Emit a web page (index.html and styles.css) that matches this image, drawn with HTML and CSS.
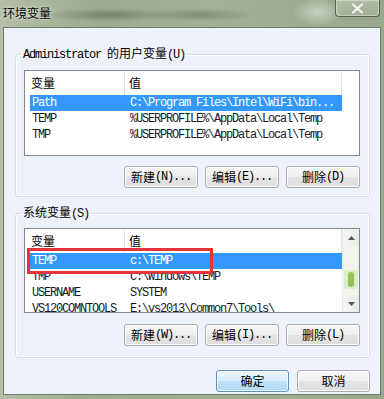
FILE: index.html
```html
<!DOCTYPE html>
<html lang="zh-CN">
<head>
<meta charset="utf-8">
<title>环境变量</title>
<link rel="stylesheet" href="styles.css">
</head>
<body>
<div class="window">
  <div class="titlebar">
    <span class="title">环境变量</span>
    <div class="close-btn">
      <svg width="17" height="11" viewBox="0 0 17 11"><path d="M4 1.5 L13 9.5 M13 1.5 L4 9.5" stroke="#ffffff" stroke-width="2.2" stroke-linecap="round" opacity="0.85"/></svg>
    </div>
  </div>
  <div class="client">
    <fieldset class="group">
      <legend><span class="lat">Administrator </span><span class="cjk">的用户变量</span><span class="lat">(U)</span></legend>
      <div class="list list-user">
        <div class="list-main">
          <div class="list-head">
            <span class="hcol1">变量</span><span class="hcol2">值</span>
          </div>
          <div class="row selected"><span class="c1">Path</span><span class="c2">C:\Program Files\Intel\WiFi\bin...</span></div>
          <div class="row"><span class="c1">TEMP</span><span class="c2">%USERPROFILE%\AppData\Local\Temp</span></div>
          <div class="row"><span class="c1">TMP</span><span class="c2">%USERPROFILE%\AppData\Local\Temp</span></div>
        </div>
      </div>
      <div class="btn-row">
        <button class="btn"><span class="cjk">新建</span><span class="lat">(N)...</span></button>
        <button class="btn"><span class="cjk">编辑</span><span class="lat">(E)...</span></button>
        <button class="btn"><span class="cjk">删除</span><span class="lat">(D)</span></button>
      </div>
    </fieldset>

    <fieldset class="group group-sys">
      <legend><span class="cjk">系统变量</span><span class="lat">(S)</span></legend>
      <div class="list list-sys">
        <div class="list-main">
          <div class="list-head">
            <span class="hcol1">变量</span><span class="hcol2">值</span>
          </div>
          <div class="row selected"><span class="c1">TEMP</span><span class="c2">c:\TEMP</span></div>
          <div class="row"><span class="c1">TMP</span><span class="c2">C:\Windows\TEMP</span></div>
          <div class="row"><span class="c1">USERNAME</span><span class="c2">SYSTEM</span></div>
          <div class="row"><span class="c1">VS120COMNTOOLS</span><span class="c2">E:\vs2013\Common7\Tools\</span></div>
          <div class="mark"></div>
        </div>
        <div class="vscroll">
          <div class="sb-arrow"><svg width="7" height="4" viewBox="0 0 7 4"><path d="M0 4 L3.5 0 L7 4 Z" fill="#4d5a60"/></svg></div>
          <div class="sb-track sb-track-top"></div>
          <div class="sb-thumb"><div class="sb-grip"></div></div>
          <div class="sb-track"></div>
          <div class="sb-arrow"><svg width="7" height="4" viewBox="0 0 7 4"><path d="M0 0 L3.5 4 L7 0 Z" fill="#4d5a60"/></svg></div>
        </div>
      </div>
      <div class="btn-row">
        <button class="btn"><span class="cjk">新建</span><span class="lat">(W)...</span></button>
        <button class="btn"><span class="cjk">编辑</span><span class="lat">(I)...</span></button>
        <button class="btn"><span class="cjk">删除</span><span class="lat">(L)</span></button>
      </div>
    </fieldset>

    <div class="footer">
      <button class="btn btn-wide btn-default">确定</button>
      <button class="btn btn-wide">取消</button>
    </div>
  </div>
</div>
</body>
</html>
```

FILE: styles.css
```css
* { box-sizing: border-box; }
html, body { margin: 0; padding: 0; }
body {
  width: 384px;
  height: 399px;
  overflow: hidden;
  font-family: "Noto Sans CJK SC", sans-serif;
  font-size: 12px;
  color: #000;
}
.window {
  width: 384px;
  height: 399px;
  display: flex;
  flex-direction: column;
  padding: 0 3px 4px 3px;
  background:
    radial-gradient(ellipse 70px 7px at 110px 15px, rgba(45,55,40,0.35), transparent),
    radial-gradient(ellipse 55px 7px at 200px 15px, rgba(45,55,40,0.3), transparent),
    radial-gradient(ellipse 25px 14px at 318px 12px, rgba(255,255,255,0.45), transparent),
    linear-gradient(to right, #b4bea9 0%, #9dab90 25%, #a4b198 55%, #97a78a 100%);
}
.window::after { content: none; }
.titlebar {
  height: 27px;
  flex: none;
  display: flex;
  align-items: center;
}
.title {
  font-size: 12px;
  line-height: 14px;
  margin-top: -1px;
  text-shadow: 0 0 5px rgba(230,235,225,0.9), 0 0 2px rgba(230,235,225,0.9);
}
.close-btn {
  align-self: flex-start;
  margin-left: auto;
  margin-right: 1px;
  width: 45px;
  height: 17px;
  border: 1px solid rgba(55,65,50,0.75);
  border-top: none;
  border-radius: 0 0 4px 4px;
  background: linear-gradient(to bottom, rgba(255,255,255,0.25), rgba(255,255,255,0.08));
  box-shadow: inset 0 0 0 1px rgba(255,255,255,0.35);
  display: flex;
  align-items: center;
  justify-content: center;
}
.client {
  flex: 1;
  background: #edf1f9;
  border: 1px solid #6f7d66;
  display: flex;
  flex-direction: column;
}
.lat {
  font-family: "Liberation Mono", monospace;
  letter-spacing: -1.2px;
}
.cjk {
  font-family: "Noto Sans CJK SC", sans-serif;
  letter-spacing: 0;
}
.group {
  margin: 17px 10px 0 11px;
  width: 355px;
  padding: 7px 9px 8px 8px;
  border: 1px solid #d5dfe5;
  border-radius: 3px;
  box-shadow: inset 0 0 0 1px #ffffff;
  min-inline-size: 0;
}
.group-sys {
  margin-top: 7px;
  padding: 6px 9px 11px 8px;
}
.group legend {
  padding: 0 2px;
  margin-left: -3px;
  line-height: 15px;
  font-size: 12px;
  white-space: pre;
}
.list {
  width: 336px;
  height: 86px;
  background: #ffffff;
  border: 1px solid #828790;
  display: flex;
}
.list-sys { height: 85px; }
.list-main {
  flex: 1;
  position: relative;
  overflow: hidden;
}
.list-head {
  height: 24px;
  display: flex;
  align-items: stretch;
  line-height: 24px;
  font-size: 12px;
}
.hcol1 {
  width: 100px;
  padding-left: 6px;
  border-right: 1px solid #e5e5e5;
}
.hcol2 {
  width: 217px;
  padding-left: 4px;
  border-right: 1px solid #e5e5e5;
}
.row {
  height: 16px;
  line-height: 16px;
  margin-left: 5px;
  width: 312px;
  display: flex;
  font-family: "Liberation Mono", monospace;
  font-size: 12px;
  letter-spacing: -1.2px;
  color: #1a1a1a;
  white-space: nowrap;
}
.row.selected {
  background: #3399ff;
  color: #ffffff;
}
.c1 { width: 95px; padding-left: 2px; overflow: hidden; }
.c2 { padding-left: 5px; }
.mark {
  position: absolute;
  left: 2px;
  top: 19px;
  width: 186px;
  height: 26px;
  border: 3px solid #e3343c;
}
.vscroll {
  width: 17px;
  flex: none;
  display: flex;
  flex-direction: column;
  background: #f2f5ee;
  border-left: 1px solid #e8ece4;
}
.sb-arrow {
  height: 17px;
  display: flex;
  align-items: center;
  justify-content: center;
  background: linear-gradient(to right, #f4f6f1, #e9ece6);
}
.sb-track { flex: 1; }
.sb-track-top { flex: 0 0 24px; }
.sb-thumb {
  height: 19px;
  margin: 0 1px;
  border-radius: 2px;
  background: #dcecc9;
  display: flex;
  align-items: center;
  justify-content: center;
}
.sb-grip {
  width: 6px;
  height: 15px;
  border-radius: 3px;
  background: #97c25a;
}
.btn-row {
  margin-top: 10px;
  display: flex;
  justify-content: flex-end;
  gap: 7px;
}
.group-sys .btn-row { margin-top: 11px; }
.btn {
  width: 74px;
  height: 22px;
  padding: 0;
  margin: 0;
  border: 1px solid #acacac;
  border-radius: 3px;
  background: linear-gradient(to bottom, #f7f7f7 0%, #efefef 48%, #e4e4e4 52%, #dedede 100%);
  box-shadow: inset 0 0 0 1px rgba(255,255,255,0.8);
  font-family: "Noto Sans CJK SC", sans-serif;
  font-size: 12px;
  line-height: 18px;
  color: #000;
  display: flex;
  align-items: center;
  justify-content: center;
  white-space: pre;
}
.footer {
  margin-top: 12px;
  padding-right: 10px;
  display: flex;
  justify-content: flex-end;
  gap: 8px;
}
.btn-wide { width: 73px; }
.btn-default {
  border-color: #5b93c2;
  background: linear-gradient(to bottom, #e9f5fc 0%, #d9effb 48%, #bfe3f7 52%, #afd8f1 100%);
}
```
